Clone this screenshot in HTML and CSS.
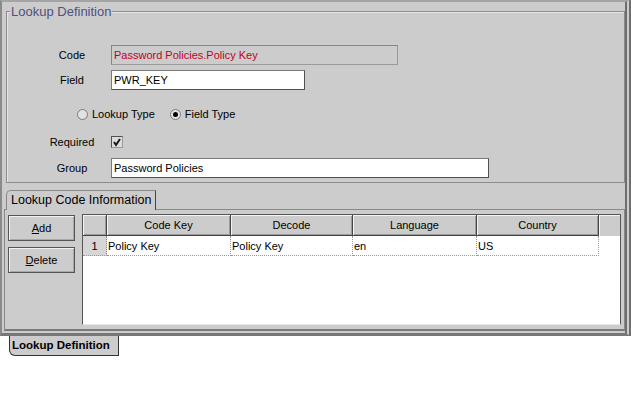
FILE: index.html
```html
<!DOCTYPE html>
<html>
<head>
<meta charset="utf-8">
<title>Lookup Definition</title>
<link rel="stylesheet" href="styles.css">
</head>
<body>
<div class="frame">
  <div class="group">
    <span class="legend">Lookup Definition</span>
    <div class="row row-code">
      <span class="label">Code</span>
      <div class="input input-code">Password Policies.Policy Key</div>
    </div>
    <div class="row row-field">
      <span class="label">Field</span>
      <div class="input input-field">PWR_KEY</div>
    </div>
    <div class="row row-radio">
      <span class="radio"></span><span class="radio-label">Lookup Type</span>
      <span class="radio radio-second on"></span><span class="radio-label">Field Type</span>
    </div>
    <div class="row row-req">
      <span class="label">Required</span>
      <span class="checkbox"><svg width="10" height="10" viewBox="0 0 10 10"><path d="M2 5 L4 8 L8 2" fill="none" stroke="#1a1a1a" stroke-width="2"/></svg></span>
    </div>
    <div class="row row-group">
      <span class="label">Group</span>
      <div class="input input-group">Password Policies</div>
    </div>
  </div>
  <div class="tabstrip"><div class="tab">Lookup Code Information</div></div>
  <div class="panel">
    <div class="buttons">
      <div class="btn"><span><u>A</u>dd</span></div>
      <div class="btn"><span><u>D</u>elete</span></div>
    </div>
    <div class="grid">
      <div class="hcell"></div>
      <div class="hcell">Code Key</div>
      <div class="hcell">Decode</div>
      <div class="hcell">Language</div>
      <div class="hcell">Country</div>
      <div class="hcell hcorner"></div>
      <div class="rownum">1</div>
      <div class="dcell">Policy Key</div>
      <div class="dcell">Policy Key</div>
      <div class="dcell">en</div>
      <div class="dcell">US</div>
      <div class="dblank"></div>
    </div>
  </div>
</div>
<div class="bottom-tab">Lookup Definition</div>
</body>
</html>
```
FILE: styles.css
```css
html, body {
  margin: 0;
  padding: 0;
  background: #ffffff;
}
body {
  font-family: "Liberation Sans", Arial, sans-serif;
  font-size: 11px;
  color: #000;
}
.frame {
  width: 631px;
  height: 336px;
  box-sizing: border-box;
  background: #cccccc;
  border-top: 2px solid #a4a4a4;
  border-left: 2px solid #8a8a8a;
  border-right: 6px double #6e6e6e;
  border-bottom: 3px solid #777;
  padding: 9px 0 2px 4px;
}
.group {
  position: relative;
  width: 619px;
  height: 172px;
  box-sizing: border-box;
  border: 1px solid #8c8c8c;
  box-shadow: inset 1px 1px 0 #e4e4e4;
  padding-top: 33px;
}
.legend {
  position: absolute;
  top: -8px;
  left: 3px;
  padding: 0 1px;
  background: #cccccc;
  color: #50507e;
  font-size: 13px;
  line-height: 16px;
}
.row {
  display: flex;
  align-items: center;
  padding-left: 33px;
}
.label {
  width: 64px;
  text-align: center;
  margin-right: 7px;
}
.row-code { height: 20px; }
.row-field { height: 20px; margin-top: 5px; }
.row-radio { height: 20px; margin-top: 14px; padding-left: 70px; }
.row-req { height: 12px; margin-top: 12px; }
.row-group { height: 20px; margin-top: 10px; }
.input {
  height: 20px;
  box-sizing: border-box;
  border: 1px solid #505050;
  border-top-color: #7a7a7a;
  border-left-color: #7a7a7a;
  background: #fff;
  padding-left: 2px;
  line-height: 18px;
  white-space: nowrap;
}
.input-code {
  width: 287px;
  background: #cccccc;
  border-color: #9a9a9a;
  border-top-color: #858585;
  border-left-color: #858585;
  color: #c4001c;
}
.input-field { width: 194px; }
.input-group { width: 378px; }
.radio {
  width: 11px;
  height: 11px;
  box-sizing: border-box;
  border-radius: 50%;
  border: 1px solid #7a7a7a;
  background: #e2e2e2;
  display: flex;
  align-items: center;
  justify-content: center;
}
.radio.on::after {
  content: "";
  width: 5px;
  height: 5px;
  border-radius: 50%;
  background: #000;
}
.radio-second { margin-left: 15px; }
.radio-label { margin-left: 4px; }
.checkbox {
  width: 12px;
  height: 12px;
  box-sizing: border-box;
  border: 1px solid #505050;
  border-right-color: #9a9a9a;
  border-bottom-color: #9a9a9a;
  background: #dcdcdc;
  display: flex;
  align-items: center;
  justify-content: center;
}
.checkbox svg { display: block; }
.tabstrip {
  margin-top: 7px;
  height: 19px;
  display: flex;
}
.tab {
  position: relative;
  z-index: 1;
  height: 20px;
  box-sizing: border-box;
  background: #cccccc;
  border: 1px solid #8a8a8a;
  border-right-color: #444;
  border-bottom: none;
  border-top-left-radius: 5px;
  padding: 0 4px;
  font-size: 12.5px;
  line-height: 18px;
  white-space: nowrap;
}
.panel {
  margin-left: -2px;
  width: 621px;
  height: 122px;
  box-sizing: border-box;
  border: 1px solid #8a8a8a;
  border-bottom: 2px solid #7a7a7a;
  padding: 4px 3px 4px 3px;
  display: flex;
  gap: 7px;
}
.buttons {
  width: 67px;
  display: flex;
  flex-direction: column;
  gap: 6px;
  padding-top: 1px;
}
.btn {
  height: 26px;
  box-sizing: border-box;
  border: 1px solid #555;
  box-shadow: inset 1px 1px 0 #f2f2f2, inset -1px -1px 0 #a8a8a8;
  display: flex;
  align-items: center;
  justify-content: center;
}
.grid {
  width: 539px;
  height: 111px;
  box-sizing: border-box;
  background: #fff;
  border: 1px solid #555;
  border-bottom-color: #e8e8e8;
  display: grid;
  grid-template-columns: 24px 124px 122px 124px 122px 1fr;
  grid-template-rows: 21px 20px;
  align-content: start;
}
.hcell {
  background: #cccccc;
  border-right: 1px solid #444;
  border-bottom: 1px solid #444;
  box-shadow: inset 1px 1px 0 #f4f4f4, inset -1px -1px 0 #9a9a9a;
  display: flex;
  align-items: center;
  justify-content: center;
}
.hcorner {
  border-right: none;
  border-bottom: none;
  box-shadow: inset 1px 1px 0 #f4f4f4;
}
.rownum {
  background: #d6d6d6;
  border-right: 1px dotted #888;
  border-bottom: 1px dotted #999;
  display: flex;
  align-items: center;
  justify-content: center;
}
.dcell {
  border-right: 1px dotted #999;
  border-bottom: 1px dotted #999;
  padding-left: 1px;
  display: flex;
  align-items: center;
  white-space: nowrap;
}
.dblank { background: #fff; }
.bottom-tab {
  margin-left: 9px;
  width: 110px;
  height: 20px;
  box-sizing: border-box;
  background: #cccccc;
  border: 1px solid #333;
  border-top: none;
  border-bottom-left-radius: 6px;
  padding-left: 2px;
  font-weight: bold;
  font-size: 11.5px;
  line-height: 19px;
  white-space: nowrap;
}
```
